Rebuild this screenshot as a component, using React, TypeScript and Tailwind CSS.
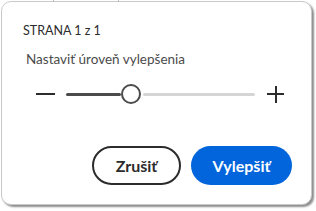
import React from "react";

export default function App() {
  return (
    <div className="relative h-[211px] w-[316px] overflow-hidden bg-white font-['Lato',sans-serif]">
      <div className="absolute left-[53px] top-0 h-[2px] w-px bg-[#bdbdbd]" />
      <div className="absolute left-[118px] top-0 h-[2px] w-px bg-[#bdbdbd]" />
      <div className="ml-px mt-px flex h-[204px] w-[311px] flex-col rounded-[10px] border border-[#c9c9c9] bg-white shadow-[2px_2px_2px_rgba(0,0,0,0.45)]">
        <div className="pl-[21px] pt-[21px] text-[12.5px] leading-[16px] text-[#2c2c2c]">STRANA 1 z 1</div>
        <div className="pl-[24px] pt-[12px] text-[13.5px] leading-[16px] text-[#4b4b4b]">Nastaviť úroveň vylepšenia</div>
        <div className="mt-[17px] flex h-[20px] items-center pl-[34px]">
          <div className="h-[2px] w-[19px] bg-[#2c2c2c]" />
          <div className="ml-[11px] h-[3px] w-[55px] rounded-full bg-[#4b4b4b]" />
          <div className="h-[20px] w-[20px] rounded-full border-2 border-[#4b4b4b] bg-white" />
          <div className="ml-[2px] h-[3px] w-[112px] rounded-full bg-[#d5d5d5]" />
          <div className="relative ml-[12px] h-[17px] w-[17px]">
            <div className="absolute left-0 top-[7.5px] h-[2px] w-[17px] bg-[#2c2c2c]" />
            <div className="absolute left-[7.5px] top-0 h-[17px] w-[2px] bg-[#2c2c2c]" />
          </div>
        </div>
        <div className="mt-auto mb-[19px] flex justify-end gap-[10px] pr-[19px]">
          <button className="h-[39px] w-[89px] rounded-full border-2 border-[#2c2c2c] bg-white text-[16px] font-bold text-[#2c2c2c]">
            Zrušiť
          </button>
          <button className="h-[39px] w-[101px] rounded-full bg-[#0265dc] text-[16px] font-bold text-white">
            Vylepšiť
          </button>
        </div>
      </div>
    </div>
  );
}
